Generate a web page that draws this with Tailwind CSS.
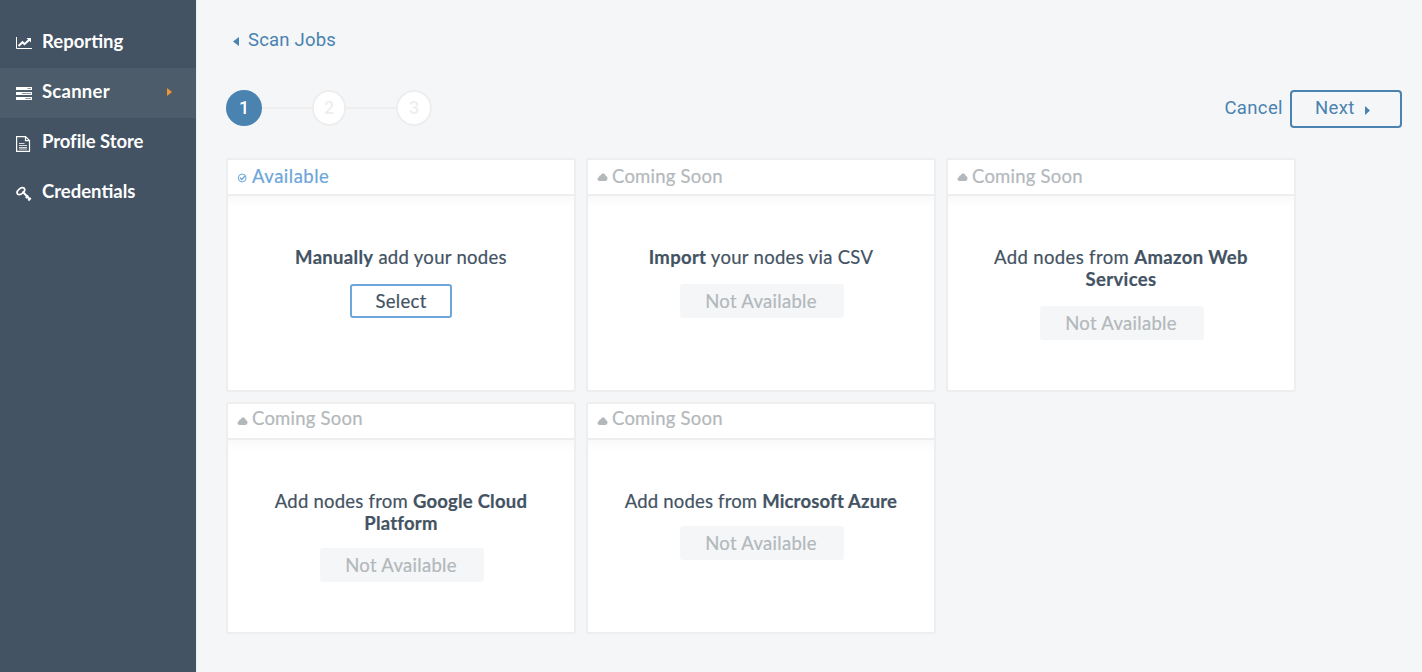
<!DOCTYPE html>
<html lang="en">
<head>
<meta charset="utf-8">
<title>Scan Jobs</title>
<script src="https://cdn.jsdelivr.net/npm/@tailwindcss/browser@4"></script>
</head>
<body class="flex h-[672px] w-[1422px] overflow-hidden bg-[#f4f6f8] font-[Lato,sans-serif] text-[18.5px] leading-[22px] text-[#435363]">
<svg class="hidden">
  <symbol id="cloud" viewBox="0 0 10 8"><path d="M2 8C.8 8 0 7.200 0 6.100c0-1 .7-1.700 1.500-1.800C1.400 3 2.400 2.200 3.300 2.300 3.800 1 4.700.4 5.800.5c1.400.1 2.300 1.200 2.300 2.600C9.300 3.300 10 4.300 10 5.500 10 7 9 8 7.700 8z" fill="currentColor"/></symbol>
</svg>
<nav class="flex w-[196px] shrink-0 flex-col bg-[#435363] pt-[18px] font-bold text-white">
  <a class="flex h-[50px] items-center pl-4"><svg class="mr-[10px] h-4 w-4" viewBox="0 0 16 16" fill="none" stroke="white"><path d="M.5 2v11.500H16" stroke-width="1"/><path d="M2.500 11l4-3.800 2 2L13.500 4.500" stroke-width="2"/><path d="M10.500 3H15v4.500z" fill="white" stroke="none"/></svg><span class="pb-1">Reporting</span></a>
  <a class="flex h-[50px] items-center bg-[#4d5c6b] pl-4"><svg class="mr-[10px] h-4 w-4" viewBox="0 0 16 16"><path fill="white" d="M0 2h16v3H0zM0 7h16v3H0zM0 12h16v3H0z"/><path fill="#8b96a1" d="M11.500 3h3.500v1h-3.500zM6 8h9v1H6zM9.500 13H15v1H9.500z"/></svg><span class="pb-1 tracking-[0.25px]">Scanner</span><svg class="mr-[24px] mb-[2px] ml-auto h-2 w-[5px]" viewBox="0 0 5 8"><path d="M0 0l5 4-5 4z" fill="#ee9535"/></svg></a>
  <a class="flex h-[50px] items-center pl-4"><svg class="mt-[2px] mr-[10px] h-4 w-4" viewBox="0 0 16 16" fill="none" stroke="white"><path d="M.6.600h8.900l4 4v10.800H.6zM9.500.600v4h4" stroke-width="1.200"/><path d="M3 7.500h5.500M3 9.500h8M3 11.500h8M3 13h8" stroke-width=".8"/></svg><span class="pb-1 tracking-[-0.08px]">Profile Store</span></a>
  <a class="flex h-[50px] items-center pl-4"><svg class="mt-[2px] mr-[10px] h-4 w-4" viewBox="0 0 16 16" fill="none" stroke="white"><path d="M1.500 7.900C.2 6.200 1.600 4.500 3.500 2.900 5.200 1.400 7.200 1 8.300 2.400c1.200 1.600.2 3.200-1.600 4.700C4.800 8.600 2.700 9.200 1.500 7.900z" stroke-width="1.700"/><path d="M6.500 5.500L14 13.500M9.800 12l2.400-2.500M12.300 14.500l2.500-2.500" stroke-width="2"/></svg><span class="pb-1">Credentials</span></a>
</nav>
<main class="flex grow flex-col border-l border-[#eceff2] pr-5 pl-[29px]">
  <a class="mt-[29px] flex h-[22px] items-center pl-[7px] font-[Roboto,sans-serif] text-[18.5px] tracking-[0.2px] text-[#4a82b0]"><svg class="mt-[3px] mr-[9px] h-[9px] w-[6px]" viewBox="0 0 6 9"><path d="M6 0v9L0 4.500z" fill="currentColor"/></svg>Scan Jobs</a>
  <div class="mt-[39px] flex h-[38px] items-center">
    <div class="mb-[2px] flex items-center font-[Roboto,sans-serif] text-[18px] font-medium text-[#eeeeee]">
      <span class="flex h-9 w-9 items-center justify-center rounded-full bg-[#4a82b0] text-white">1</span>
      <span class="h-[2px] w-[50px] bg-[#eeeeee]"></span>
      <span class="flex h-9 w-[34px] items-center justify-center rounded-full border-2 border-[#eeeeee] bg-white">2</span>
      <span class="h-[2px] w-[50px] bg-[#eeeeee]"></span>
      <span class="flex h-9 w-9 items-center justify-center rounded-full border-2 border-[#eeeeee] bg-white">3</span>
    </div>
    <div class="ml-auto flex items-center font-[Roboto,sans-serif] text-[18.5px] tracking-[0.38px] text-[#4a82b0]">
      <span class="mr-[7px] pb-[2px]">Cancel</span>
      <button class="flex h-[38px] w-[112px] items-center rounded-[4px] border-2 border-[#4a82b0] pl-[23px]"><span class="pb-[2px]">Next</span><svg class="mt-[3px] ml-[10px] h-[9px] w-[5px]" viewBox="0 0 5 9"><path d="M0 0l5 4.500L0 9z" fill="currentColor"/></svg></button>
    </div>
  </div>
  <div class="mt-[30px] grid grid-cols-[350px_350px_350px] grid-rows-[234px_232px] gap-[10px] tracking-[0.3px] [-webkit-text-stroke:0.2px]">
    <section class="rounded-[3px] border-2 border-[#eeeeee] bg-white">
      <h2 class="flex h-9 items-center border-b-2 border-[#eeeeee] pl-[9px] text-[#6da6da]"><svg class="mt-[2px] mr-[5px] h-[10px] w-[10px]" viewBox="0 0 10 10" fill="none" stroke="currentColor"><circle cx="5.200" cy="5" r="3.900"/><path d="M3 4.800l1.700 1.700L8 3" stroke-width="1.300"/></svg><span class="pb-[2px] tracking-[0.5px]">Available</span></h2>
      <div class="h-3 bg-linear-to-b from-[#f9f9f9] to-white"></div>
      <div class="flex flex-col items-center pt-[38px]"><p><b>Manually</b> add your nodes</p><button class="mt-4 h-[34px] w-[102px] rounded-[3px] border-2 border-[#6da6da]">Select</button></div>
    </section>
    <section class="rounded-[3px] border-2 border-[#eeeeee] bg-white">
      <h2 class="flex h-9 items-center border-b-2 border-[#eeeeee] pl-[9px] tracking-[0.22px] text-[#b3b8bb]"><svg class="mr-[4px] h-2 w-[11px]"><use href="#cloud"/></svg><span class="pb-[2px]">Coming Soon</span></h2>
      <div class="h-3 bg-linear-to-b from-[#f9f9f9] to-white"></div>
      <div class="flex flex-col items-center pt-[38px]"><p><b>Import</b> your nodes via CSV</p><button class="mt-4 ml-[2px] h-[34px] w-[164px] rounded-[3px] bg-[#f4f6f8] pr-[2px] text-[#b3b8bb]">Not Available</button></div>
    </section>
    <section class="rounded-[3px] border-2 border-[#eeeeee] bg-white">
      <h2 class="flex h-9 items-center border-b-2 border-[#eeeeee] pl-[9px] tracking-[0.22px] text-[#b3b8bb]"><svg class="mr-[4px] h-2 w-[11px]"><use href="#cloud"/></svg><span class="pb-[2px]">Coming Soon</span></h2>
      <div class="h-3 bg-linear-to-b from-[#f9f9f9] to-white"></div>
      <div class="flex flex-col items-center pt-[38px] text-center"><p class="tracking-[0.36px]">Add nodes from <b>Amazon Web<br>Services</b></p><button class="mt-4 ml-[2px] h-[34px] w-[164px] rounded-[3px] bg-[#f4f6f8] pr-[2px] text-[#b3b8bb]">Not Available</button></div>
    </section>
    <section class="rounded-[3px] border-2 border-[#eeeeee] bg-white">
      <h2 class="flex h-9 items-center border-b-2 border-[#eeeeee] pb-1 pl-[9px] tracking-[0.22px] text-[#b3b8bb]"><svg class="mt-[4px] mr-[4px] h-2 w-[11px]"><use href="#cloud"/></svg><span class="pb-[2px]">Coming Soon</span></h2>
      <div class="h-3 bg-linear-to-b from-[#f9f9f9] to-white"></div>
      <div class="flex flex-col items-center pt-[38px] text-center"><p class="tracking-[0.22px]">Add nodes from <b>Google Cloud<br>Platform</b></p><button class="mt-[14px] ml-[2px] h-[34px] w-[164px] rounded-[3px] bg-[#f4f6f8] pr-[2px] text-[#b3b8bb]">Not Available</button></div>
    </section>
    <section class="rounded-[3px] border-2 border-[#eeeeee] bg-white">
      <h2 class="flex h-9 items-center border-b-2 border-[#eeeeee] pb-1 pl-[9px] tracking-[0.22px] text-[#b3b8bb]"><svg class="mt-[4px] mr-[4px] h-2 w-[11px]"><use href="#cloud"/></svg><span class="pb-[2px]">Coming Soon</span></h2>
      <div class="h-3 bg-linear-to-b from-[#f9f9f9] to-white"></div>
      <div class="flex flex-col items-center pt-[38px] text-center"><p class="tracking-[0.17px]">Add nodes from <b>Microsoft Azure</b></p><button class="mt-[14px] ml-[2px] h-[34px] w-[164px] rounded-[3px] bg-[#f4f6f8] pr-[2px] text-[#b3b8bb]">Not Available</button></div>
    </section>
  </div>
</main>
</body>
</html>
